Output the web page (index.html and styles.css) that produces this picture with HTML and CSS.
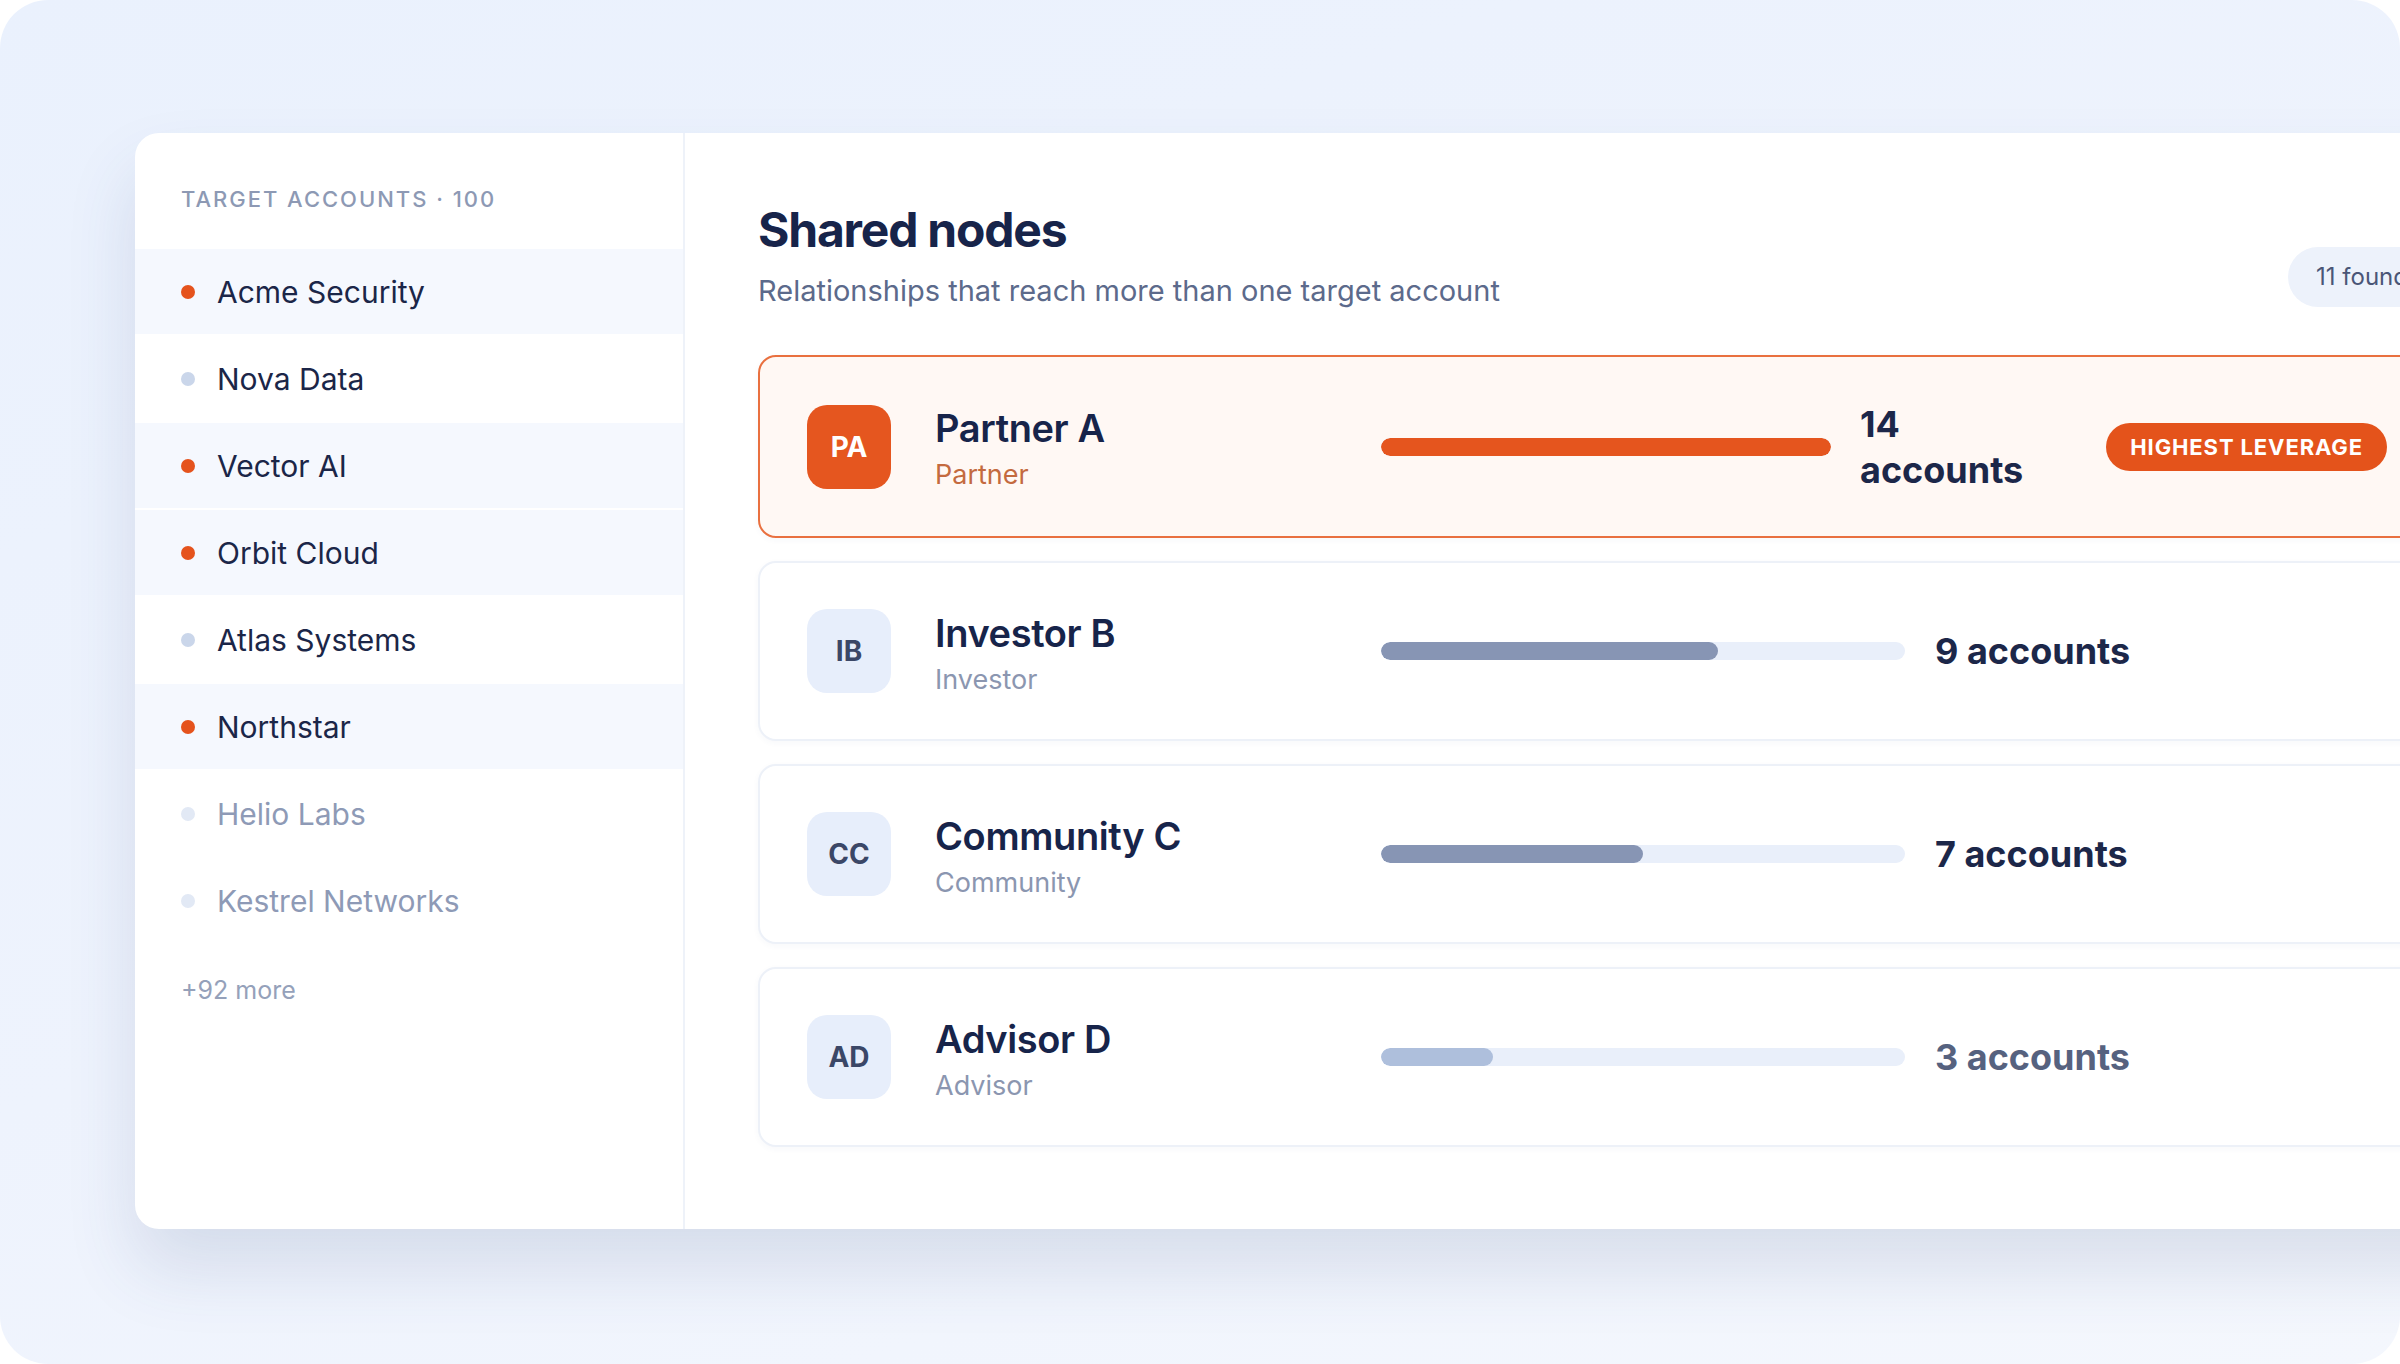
FILE: index.html
```html
<!DOCTYPE html>
<html lang="en">
  <head>
    <meta charset="UTF-8" />
    <meta name="viewport" content="width=device-width, initial-scale=1.0" />
    <title>Shared nodes</title>

    <link rel="stylesheet" href="styles.css">
  </head>

  <body>
    <div class="frame">
      <div class="panel">
        <!-- target accounts -->
        <aside class="side">
          <p class="eyebrow">Target accounts · 100</p>
          <ul class="accounts">
            <li class="account active"><span class="dot"></span>Acme Security</li>
            <li class="account"><span class="dot"></span>Nova Data</li>
            <li class="account active"><span class="dot"></span>Vector AI</li>
            <li class="account active"><span class="dot"></span>Orbit Cloud</li>
            <li class="account"><span class="dot"></span>Atlas Systems</li>
            <li class="account active"><span class="dot"></span>Northstar</li>
            <li class="account faded"><span class="dot"></span>Helio Labs</li>
            <li class="account faded"><span class="dot"></span>Kestrel Networks</li>
          </ul>
          <p class="more">+92 more</p>
        </aside>

        <!-- shared nodes -->
        <section class="main">
          <div class="header">
            <div>
              <h1>Shared nodes</h1>
              <p class="subtitle">Relationships that reach more than one target account</p>
            </div>
            <span class="pill">11 found</span>
          </div>

          <div class="nodes">
            <div class="node top">
              <div class="avatar">PA</div>
              <div class="info">
                <h3>Partner A</h3>
                <p>Partner</p>
              </div>
              <div class="track"><div class="fill" style="width: 100%"></div></div>
              <div class="count">14 accounts</div>
              <span class="badge">Highest leverage</span>
            </div>

            <div class="node">
              <div class="avatar">IB</div>
              <div class="info">
                <h3>Investor B</h3>
                <p>Investor</p>
              </div>
              <div class="track"><div class="fill" style="width: 64.3%"></div></div>
              <div class="count">9 accounts</div>
            </div>

            <div class="node">
              <div class="avatar">CC</div>
              <div class="info">
                <h3>Community C</h3>
                <p>Community</p>
              </div>
              <div class="track"><div class="fill" style="width: 50%"></div></div>
              <div class="count">7 accounts</div>
            </div>

            <div class="node low">
              <div class="avatar">AD</div>
              <div class="info">
                <h3>Advisor D</h3>
                <p>Advisor</p>
              </div>
              <div class="track"><div class="fill" style="width: 21.4%"></div></div>
              <div class="count">3 accounts</div>
            </div>
          </div>
        </section>
      </div>
    </div>
  </body>
</html>
```

FILE: styles.css
```css
* {
  font-family: Inter, "Noto Sans", Arial, sans-serif;
  margin: 0px;
  padding: 0px;
  box-sizing: border-box;
}
body {
  background-color: white;
  overflow: hidden;
}

.frame {
  width: 2400px;
  height: 1364px;
  padding: 133px 0 0 135px;
  border-radius: 48px;
  background: linear-gradient(160deg, #eaf1fd 0%, #eef3fd 50%, #f4f7fd 100%);
  overflow: hidden;
}

.panel {
  display: flex;
  width: 2376px;
  height: 1096px;
  background-color: white;
  border-radius: 24px;
  box-shadow: 0px 40px 70px rgba(60, 80, 130, 0.14);
}

/* sidebar */
.side {
  width: 550px;
  flex: none;
  padding-top: 50px;
  border-right: 2px solid #eef2f9;
}

.eyebrow {
  padding-left: 46px;
  margin-bottom: 34px;
  font-size: 22px;
  line-height: 32px;
  font-weight: 500;
  letter-spacing: 0.09em;
  text-transform: uppercase;
  color: #8d99b4;
}

.accounts {
  list-style: none;
}

.account {
  display: flex;
  align-items: center;
  height: 85px;
  margin-bottom: 2px;
  padding-left: 46px;
  font-size: 30px;
  color: #1b2648;
}

.account.active {
  background-color: #f5f8fe;
}

.dot {
  width: 14px;
  height: 14px;
  margin-right: 22px;
  border-radius: 50%;
  background-color: #cad6ea;
}

.account.active .dot {
  background-color: #e5531d;
}

.account.faded {
  color: #8e9ab6;
}

.account.faded .dot {
  background-color: #e2e9f5;
}

.more {
  padding-left: 46px;
  margin-top: 30px;
  font-size: 25px;
  line-height: 34px;
  color: #95a1ba;
}

/* main */
.main {
  flex: 1;
  padding: 69px 75px 0 73px;
}

.header {
  display: flex;
  justify-content: space-between;
  align-items: flex-end;
  margin-bottom: 46px;
}

h1 {
  font-size: 48px;
  line-height: 56px;
  font-weight: 700;
  letter-spacing: -0.025em;
  color: #17244a;
}

.subtitle {
  margin-top: 15px;
  font-size: 29px;
  line-height: 36px;
  color: #5c6a8b;
}

.pill {
  margin-bottom: 2px;
  padding: 0 28px;
  height: 60px;
  line-height: 60px;
  border-radius: 30px;
  background-color: #edf2fb;
  font-size: 24px;
  color: #4a5677;
}

.nodes {
  display: flex;
  flex-direction: column;
  gap: 23px;
}

.node {
  display: flex;
  align-items: center;
  height: 180px;
  padding: 0 47px;
  background-color: white;
  border: 2px solid #edf1f8;
  border-radius: 18px;
  box-shadow: 0px 2px 6px rgba(60, 80, 130, 0.04);
}

.node.top {
  height: 183px;
  background-color: #fff8f4;
  border-color: #e9703f;
}

.avatar {
  width: 84px;
  height: 84px;
  flex: none;
  margin-right: 44px;
  border-radius: 20px;
  background-color: #e7eefb;
  color: #3b4767;
  font-size: 28px;
  font-weight: 700;
  display: flex;
  align-items: center;
  justify-content: center;
}

.node.top .avatar {
  background-color: #e5561f;
  color: white;
}

.info {
  width: 446px;
  flex: none;
  padding-top: 4px;
}

.info h3 {
  font-size: 38px;
  line-height: 46px;
  font-weight: 600;
  letter-spacing: -0.01em;
  color: #17244a;
}

.info p {
  margin-top: 7px;
  font-size: 27px;
  line-height: 34px;
  color: #8b96b0;
}

.node.top .info p {
  color: #c46a3f;
}

.track {
  width: 524px;
  height: 18px;
  flex: none;
  margin-right: 30px;
  border-radius: 9px;
  background-color: #e9effa;
  overflow: hidden;
}

.node.top .track {
  width: 450px;
  margin-right: 29px;
}

.fill {
  height: 100%;
  border-radius: 9px;
  background-color: #8795b4;
}

.node.top .fill {
  background-color: #e5551e;
}

.node.low .fill {
  background-color: #aebfdc;
}

.count {
  font-size: 36px;
  line-height: 46px;
  font-weight: 700;
  color: #1c2749;
}

.node.top .count {
  width: 180px;
}

.node.low .count {
  color: #56627f;
}

.badge {
  margin-left: auto;
  padding: 0 24px;
  height: 48px;
  line-height: 48px;
  border-radius: 24px;
  background-color: #e4531b;
  color: white;
  font-size: 22px;
  font-weight: 700;
  letter-spacing: 0.04em;
  text-transform: uppercase;
}
```
